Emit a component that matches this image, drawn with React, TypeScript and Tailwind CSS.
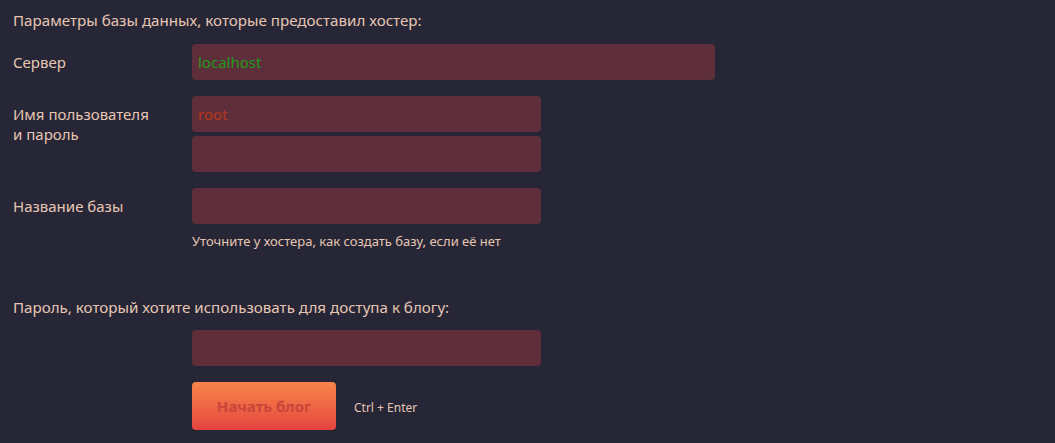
import React from "react";

const font = { fontFamily: '"Noto Sans", "Open Sans", sans-serif' };

function Field({ value, color, wide }: { value?: string; color?: string; wide?: boolean }) {
  return (
    <div
      className={`h-[36px] ${wide ? "w-[523px]" : "w-[349px]"} rounded-[4px] bg-[#5e2f3a] px-[6px] flex items-center text-[15px] ${color ?? ""}`}
    >
      {value}
    </div>
  );
}

export default function App() {
  return (
    <div
      className="min-h-[443px] w-full bg-[#262637] text-[#e6c6b3] px-[13px] pt-[10px]"
      style={font}
    >
      <div className="text-[15.15px] leading-[20px]">Параметры базы данных, которые предоставил хостер:</div>

      <div className="mt-[14px] flex">
        <div className="w-[179px] pt-[8px] text-[15px] leading-[20px]">Сервер</div>
        <Field value="localhost" color="text-[#1f9a1a]" wide />
      </div>

      <div className="mt-[16px] flex">
        <div className="w-[179px] pt-[8px] text-[15px] leading-[20px]">
          Имя пользователя
          <br />и пароль
        </div>
        <div className="flex flex-col gap-[4px]">
          <Field value="root" color="text-[#b8361c]" />
          <Field />
        </div>
      </div>

      <div className="mt-[16px] flex">
        <div className="w-[179px] pt-[8px] text-[15px] leading-[20px]">Название базы</div>
        <div className="flex flex-col">
          <Field />
          <div className="mt-[8px] text-[13px] leading-[18px]">
            Уточните у хостера, как создать базу, если её нет
          </div>
        </div>
      </div>

      <div className="mt-[47px] text-[15.15px] leading-[20px]">
        Пароль, который хотите использовать для доступа к блогу:
      </div>

      <div className="mt-[13px] flex">
        <div className="w-[179px]" />
        <div className="flex flex-col">
          <Field />
          <div className="mt-[16px] flex items-center">
            <button className="h-[48px] w-[144px] rounded-[4px] bg-gradient-to-b from-[#f8844a] to-[#e4433f] text-[15px] font-bold text-[#c9463a]">
              Начать блог
            </button>
            <span className="ml-[18px] pt-[4px] text-[12px]">Ctrl + Enter</span>
          </div>
        </div>
      </div>
    </div>
  );
}
